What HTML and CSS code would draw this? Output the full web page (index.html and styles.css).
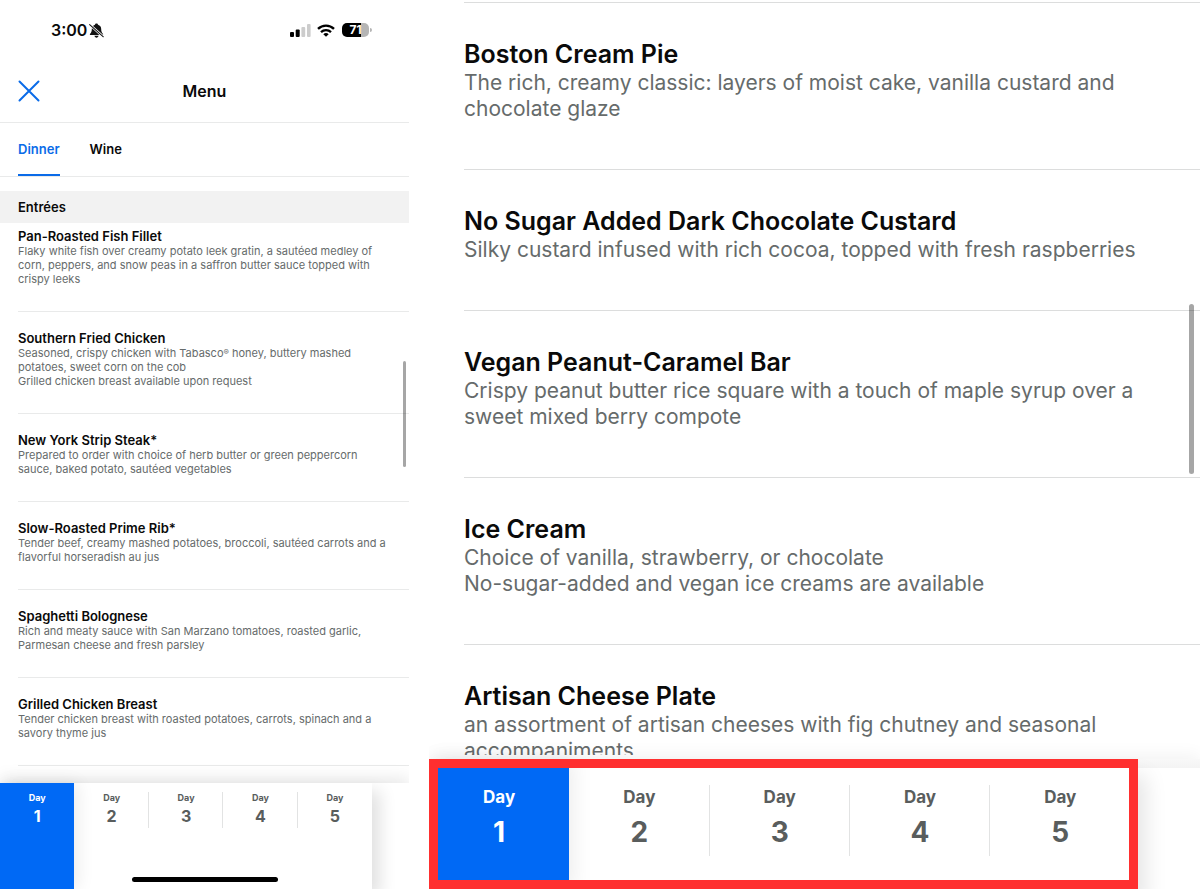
FILE: index.html
```html
<!DOCTYPE html>
<html lang="en">
<head>
<meta charset="utf-8">
<meta name="viewport" content="width=device-width, initial-scale=1">
<title>Menu</title>
<link rel="stylesheet" href="styles.css">
</head>
<body>
<main class="panes">
  <section class="pane phone" aria-label="Dinner menu">
    <div class="status">
      <div class="status-side">
        <span class="time">3:00</span>
        <svg class="bell" viewBox="0 0 16 16" aria-hidden="true">
          <path d="M8 .5c-.9 0-1.500.6-1.600 1.300C4.200 2.500 3 4.200 3 6.300c0 3-.8 3.900-1.800 5.100-.6.7-.2 1.500.6 1.500h12.400c.8 0 1.200-.8.600-1.500-1-1.200-1.800-2.100-1.800-5.100 0-2.100-1.200-3.800-3.400-4.500C9.500 1.100 8.900.5 8 .5zM5.800 13.700c.2 1.200 1.100 1.900 2.200 1.900s2-.7 2.200-1.900z" fill="#111"/>
          <path d="M.5 1.500l15 13.500" stroke="#fff" stroke-width="2.600"/>
          <path d="M.7 1.700l14.600 13" stroke="#111" stroke-width="1.100" stroke-linecap="round"/>
        </svg>
      </div>
      <div class="status-side">
        <svg class="signal" viewBox="0 0 21 13" aria-hidden="true">
          <rect x="0" y="8" width="4" height="5" rx="1" fill="#000"/>
          <rect x="5.700" y="5.500" width="4" height="7.500" rx="1" fill="#000"/>
          <rect x="11.400" y="3" width="3.800" height="10" rx="1" fill="#ccc"/>
          <rect x="17" y="0" width="3.600" height="13" rx="1" fill="#ccc"/>
        </svg>
        <svg class="wifi" viewBox="0 0 18 13" aria-hidden="true" fill="none" stroke="#000">
          <path d="M1 4.900a11.500 11.500 0 0 1 16 0" stroke-width="2.400"/>
          <path d="M4 8.200a7.200 7.200 0 0 1 10 0" stroke-width="2.300"/>
          <path d="M9 12.800L6.300 10.200a3.900 3.900 0 0 1 5.400 0z" fill="#000" stroke="none"/>
        </svg>
        <span class="battery"><span class="battery-text">71</span></span>
      </div>
    </div>
    <header class="header">
      <button class="close" type="button" aria-label="Close">
        <svg viewBox="0 0 22 22" aria-hidden="true"><path d="M1.500 1.500l19 19M20.500 1.500l-19 19" stroke="#0a6be8" stroke-width="2" stroke-linecap="round"/></svg>
      </button>
      <h1 class="heading">Menu</h1>
    </header>
    <nav class="tabs" aria-label="Menu type">
      <button class="tab active" type="button">Dinner</button>
      <button class="tab" type="button">Wine</button>
    </nav>
    <h2 class="group">Entrées</h2>
    <ul class="list">
      <li class="dish"><h3 class="name">Pan-Roasted Fish Fillet</h3><p class="desc">Flaky white fish over creamy potato leek gratin, a sautéed medley of<br>corn, peppers, and snow peas in a saffron butter sauce topped with<br>crispy leeks</p></li>
      <li class="dish"><h3 class="name">Southern Fried Chicken</h3><p class="desc">Seasoned, crispy chicken with Tabasco<sup class="mark">®</sup> honey, buttery mashed<br>potatoes, sweet corn on the cob<br>Grilled chicken breast available upon request</p></li>
      <li class="dish"><h3 class="name">New York Strip Steak*</h3><p class="desc">Prepared to order with choice of herb butter or green peppercorn<br>sauce, baked potato, sautéed vegetables</p></li>
      <li class="dish"><h3 class="name">Slow-Roasted Prime Rib*</h3><p class="desc">Tender beef, creamy mashed potatoes, broccoli, sautéed carrots and a<br>flavorful horseradish au jus</p></li>
      <li class="dish"><h3 class="name">Spaghetti Bolognese</h3><p class="desc">Rich and meaty sauce with San Marzano tomatoes, roasted garlic,<br>Parmesan cheese and fresh parsley</p></li>
      <li class="dish"><h3 class="name">Grilled Chicken Breast</h3><p class="desc">Tender chicken breast with roasted potatoes, carrots, spinach and a<br>savory thyme jus</p></li>
    </ul>
    <span class="thumb"></span>
    <footer class="footer">
      <nav class="days" aria-label="Day">
        <button class="day active" type="button"><span class="word">Day</span><span class="num">1</span></button>
        <button class="day" type="button"><span class="word">Day</span><span class="num">2</span></button>
        <button class="day" type="button"><span class="word">Day</span><span class="num">3</span></button>
        <button class="day" type="button"><span class="word">Day</span><span class="num">4</span></button>
        <button class="day" type="button"><span class="word">Day</span><span class="num">5</span></button>
      </nav>
      <span class="home"></span>
    </footer>
  </section>

  <section class="pane closeup" aria-label="Dessert menu">
    <ul class="list">
      <li class="dish"><h3 class="name">Boston Cream Pie</h3><p class="desc">The rich, creamy classic: layers of moist cake, vanilla custard and<br>chocolate glaze</p></li>
      <li class="dish"><h3 class="name">No Sugar Added Dark Chocolate Custard</h3><p class="desc">Silky custard infused with rich cocoa, topped with fresh raspberries</p></li>
      <li class="dish"><h3 class="name">Vegan Peanut-Caramel Bar</h3><p class="desc">Crispy peanut butter rice square with a touch of maple syrup over a<br>sweet mixed berry compote</p></li>
      <li class="dish"><h3 class="name">Ice Cream</h3><p class="desc">Choice of vanilla, strawberry, or chocolate<br>No-sugar-added and vegan ice creams are available</p></li>
      <li class="dish"><h3 class="name">Artisan Cheese Plate</h3><p class="desc">an assortment of artisan cheeses with fig chutney and seasonal<br>accompaniments</p></li>
    </ul>
    <span class="thumb"></span>
    <footer class="footer">
      <nav class="days" aria-label="Day">
        <button class="day active" type="button"><span class="word">Day</span><span class="num">1</span></button>
        <button class="day" type="button"><span class="word">Day</span><span class="num">2</span></button>
        <button class="day" type="button"><span class="word">Day</span><span class="num">3</span></button>
        <button class="day" type="button"><span class="word">Day</span><span class="num">4</span></button>
        <button class="day" type="button"><span class="word">Day</span><span class="num">5</span></button>
      </nav>
    </footer>
  </section>
</main>
</body>
</html>
```
FILE: styles.css
```css
* { box-sizing: border-box; }
body { margin: 0; background: #fff; color: #0a0a0a; font-family: Inter, "Open Sans", sans-serif; }
h1, h2, h3, p, ul { margin: 0; padding: 0; font-weight: 400; }
h1, h2, h3 { font-weight: 600; }
ul { list-style: none; }
button { border: 0; padding: 0; background: none; font: inherit; color: inherit; cursor: pointer; }
svg { display: block; }

.panes { display: grid; grid-template-columns: 409fr 771fr; column-gap: 20px; height: 100vh; }
.pane { position: relative; display: flex; flex-direction: column; min-width: 0; min-height: 0; overflow: hidden; }
.list { flex: 1; min-height: 0; overflow: hidden; }
.desc { color: #666b6b; white-space: nowrap; }
.name { white-space: nowrap; }
.mark { font-size: 8px; line-height: 0; vertical-align: 2px; }
.thumb { position: absolute; border-radius: 3px; background: rgba(0, 0, 0, 0.35); }
.footer { position: relative; flex: none; background: #fff; }
.days { display: flex; background: #fff; color: #595d5d; font-weight: 700; }
.day { position: relative; flex: 1; display: flex; flex-direction: column; align-items: center; }
.day.active { background: #0069f5; color: #fff; }
.day:nth-child(n+2)::after { content: ""; position: absolute; right: 0; width: 1px; background: #e2e3e3; }
.day:last-child::after { display: none; }

/* Phone pane */
.status { flex: none; display: flex; justify-content: space-between; align-items: center; height: 60px; padding: 0 40px 0 51px; }
.status-side { display: flex; align-items: center; }
.time { font-size: 16px; font-weight: 600; line-height: 20px; }
.bell { width: 15px; height: 15px; margin-left: 2px; }
.signal { width: 21px; height: 13px; }
.wifi { width: 18px; height: 13px; margin: 0 7px 0 6px; }
.battery { position: relative; width: 27px; height: 14px; border-radius: 5px; background: linear-gradient(90deg, #000 71%, #b5b5b5 71%); text-align: center; }
.battery::after { content: ""; position: absolute; left: 28px; top: 5px; width: 2px; height: 4px; border-radius: 0 2px 2px 0; background: #b5b5b5; }
.battery-text { display: block; color: #fff; font-size: 12px; font-weight: 700; line-height: 14px; }
.header { flex: none; display: grid; grid-template-columns: 22px 1fr 22px; align-items: center; height: 63px; padding: 0 18px; border-bottom: 1px solid #e9eaea; }
.close svg { width: 22px; height: 22px; }
.heading { text-align: center; font-size: 16px; line-height: 24px; }
.tabs { flex: none; display: flex; gap: 30px; height: 54px; padding: 0 18px; border-bottom: 1px solid #e9eaea; font-size: 13px; font-weight: 600; }
.tab { border-bottom: 2px solid transparent; }
.tab.active { color: #0a6be8; border-color: #0a6be8; }
.group { flex: none; margin-top: 14px; padding: 0 18px; background: #f2f2f2; font-size: 13px; line-height: 32px; }
.phone .dish { margin-left: 18px; padding: 18px 0 25px; border-bottom: 1px solid #e9eaea; }
.phone .dish:first-child { padding-top: 5px; }
.phone .name { font-size: 13px; line-height: 16px; }
.phone .desc { font-size: 11px; line-height: 14px; }
.phone .thumb { right: 3px; top: 361px; width: 3px; height: 106px; }
.phone .footer { height: 106px; box-shadow: 0 -4px 16px rgba(0, 0, 0, 0.1); }
.phone .days { width: 91%; height: 100%; box-shadow: 8px 8px 16px rgba(0, 0, 0, 0.12); }
.phone .day { padding-top: 8px; }
.phone .day.active { box-shadow: 4px 0 16px rgba(0, 0, 0, 0.08); }
.phone .day::after { top: 9px; height: 36px; }
.phone .word { font-size: 9px; line-height: 14px; }
.phone .num { margin-top: 1px; font-size: 16px; line-height: 20px; }
.home { position: absolute; left: 50%; bottom: 7px; width: 146px; height: 5px; margin-left: -73px; border-radius: 3px; background: #000; }

/* Close-up pane */
.closeup .list { margin: 0 0 4px 35px; padding-top: 2px; }
.closeup .dish { padding: 35px 0 47px; border-top: 1px solid #dcdddd; }
.closeup .name { font-size: 25px; line-height: 32px; }
.closeup .desc { font-size: 21px; line-height: 26px; }
.closeup .thumb { right: 6px; top: 304px; width: 5px; height: 170px; }
.closeup .footer { height: 130px; background: linear-gradient(#f8f8f8, #f4f4f4 9px, #fff 9px); box-shadow: 0 -4px 16px rgba(0, 0, 0, 0.05); }
.closeup .days { position: relative; width: 92%; height: 100%; padding-right: 8px; box-shadow: 8px 16px 20px rgba(0, 0, 0, 0.1); }
.closeup .days::after { content: ""; position: absolute; inset: 0; border: 9px solid #ff2f2f; pointer-events: none; }
.closeup .day { padding-top: 26px; }
.closeup .day.active { box-shadow: 4px 0 20px rgba(0, 0, 0, 0.08); }
.closeup .day::after { top: 26px; height: 71px; }
.closeup .word { font-size: 17px; line-height: 24px; }
.closeup .num { margin-top: 5px; font-size: 28px; line-height: 36px; }
```
